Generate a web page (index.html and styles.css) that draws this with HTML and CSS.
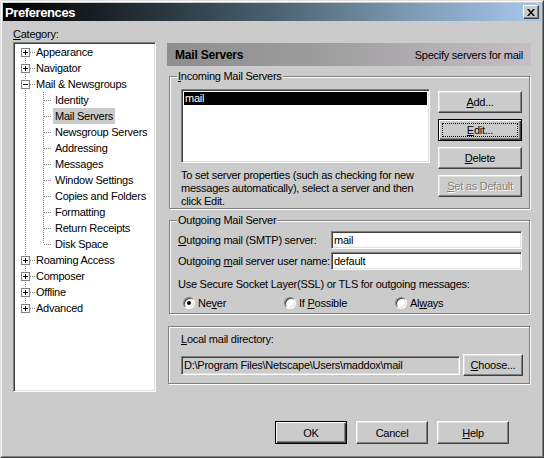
FILE: index.html
```html
<!DOCTYPE html>
<html lang="en">
<head>
    <meta charset="UTF-8">
    <title>Preferences</title>
    <link rel="stylesheet" href="styles.css">
</head>
<body>
<div class="window">
  <div class="frame">
    <header class="titlebar">
        <span class="title">Preferences</span>
        <span class="close">
            <svg width="8" height="7" viewBox="0 0 8 7"><path d="M0 0h2l2 2.4 2-2.4h2l-3 3.5 3 3.5h-2l-2-2.4-2 2.4h-2l3-3.5z" fill="#000"/></svg>
        </span>
    </header>

    <div class="main">
        <aside class="sidebar">
            <div class="cat-label"><u>C</u>ategory:</div>
            <div class="tree">
                <div class="node l-first"><svg class="exp" width="9" height="9"><rect x="0.5" y="0.5" width="8" height="8" fill="#fff" stroke="#808080"/><path d="M2 4.5h5M4.5 2v5" stroke="#000"/></svg><span class="hl"></span><span class="txt">Appearance</span></div>
                <div class="node l-full"><svg class="exp" width="9" height="9"><rect x="0.5" y="0.5" width="8" height="8" fill="#fff" stroke="#808080"/><path d="M2 4.5h5M4.5 2v5" stroke="#000"/></svg><span class="hl"></span><span class="txt">Navigator</span></div>
                <div class="node l-full"><svg class="exp" width="9" height="9"><rect x="0.5" y="0.5" width="8" height="8" fill="#fff" stroke="#808080"/><path d="M2 4.5h5" stroke="#000"/></svg><span class="hl"></span><span class="txt">Mail &amp; Newsgroups</span></div>
                <div class="node child l-full"><span class="hl"></span><span class="txt">Identity</span></div>
                <div class="node child l-full"><span class="hl"></span><span class="txt selected">Mail Servers</span></div>
                <div class="node child l-full"><span class="hl"></span><span class="txt">Newsgroup Servers</span></div>
                <div class="node child l-full"><span class="hl"></span><span class="txt">Addressing</span></div>
                <div class="node child l-full"><span class="hl"></span><span class="txt">Messages</span></div>
                <div class="node child l-full"><span class="hl"></span><span class="txt">Window Settings</span></div>
                <div class="node child l-full"><span class="hl"></span><span class="txt">Copies and Folders</span></div>
                <div class="node child l-full"><span class="hl"></span><span class="txt">Formatting</span></div>
                <div class="node child l-full"><span class="hl"></span><span class="txt">Return Receipts</span></div>
                <div class="node child last l-full"><span class="hl"></span><span class="txt">Disk Space</span></div>
                <div class="node l-full"><svg class="exp" width="9" height="9"><rect x="0.5" y="0.5" width="8" height="8" fill="#fff" stroke="#808080"/><path d="M2 4.5h5M4.5 2v5" stroke="#000"/></svg><span class="hl"></span><span class="txt">Roaming Access</span></div>
                <div class="node l-full"><svg class="exp" width="9" height="9"><rect x="0.5" y="0.5" width="8" height="8" fill="#fff" stroke="#808080"/><path d="M2 4.5h5M4.5 2v5" stroke="#000"/></svg><span class="hl"></span><span class="txt">Composer</span></div>
                <div class="node l-full"><svg class="exp" width="9" height="9"><rect x="0.5" y="0.5" width="8" height="8" fill="#fff" stroke="#808080"/><path d="M2 4.5h5M4.5 2v5" stroke="#000"/></svg><span class="hl"></span><span class="txt">Offline</span></div>
                <div class="node l-last"><svg class="exp" width="9" height="9"><rect x="0.5" y="0.5" width="8" height="8" fill="#fff" stroke="#808080"/><path d="M2 4.5h5M4.5 2v5" stroke="#000"/></svg><span class="hl"></span><span class="txt">Advanced</span></div>
            </div>
        </aside>

        <section class="panel">
            <div class="panel-head">
                <span class="panel-title">Mail Servers</span>
                <span>Specify servers for mail</span>
            </div>

            <fieldset class="group incoming">
                <legend><u>I</u>ncoming Mail Servers</legend>
                <div class="incoming-row">
                    <div class="incoming-left">
                        <div class="listbox">
                            <div class="list-item selected">mail</div>
                        </div>
                        <p class="hint">To set server properties (such as checking for new messages automatically), select a server and then click Edit.</p>
                    </div>
                    <div class="btn-col">
                        <button class="btn"><u>A</u>dd...</button>
                        <button class="btn default focus"><u>E</u>dit...</button>
                        <button class="btn"><u>D</u>elete</button>
                        <button class="btn disabled"><u>S</u>et as Default</button>
                    </div>
                </div>
            </fieldset>

            <fieldset class="group outgoing">
                <legend>Outgoing Mail Server</legend>
                <div class="form-row">
                    <label><u>O</u>utgoing mail (SMTP) server:</label>
                    <input class="field" value="mail">
                </div>
                <div class="form-row">
                    <label>Outgoing <u>m</u>ail server user name:</label>
                    <input class="field" value="default">
                </div>
                <div class="ssl-text">Use Secure Socket Layer(SSL) or TLS for outgoing messages:</div>
                <div class="radios">
                    <span class="radio-item first"><span class="radio checked"></span><span>Ne<u>v</u>er</span></span>
                    <span class="radio-item second"><span class="radio"></span><span>If <u>P</u>ossible</span></span>
                    <span class="radio-item"><span class="radio"></span><span>Al<u>w</u>ays</span></span>
                </div>
            </fieldset>

            <div class="group local">
                <div class="local-label"><u>L</u>ocal mail directory:</div>
                <div class="local-row">
                    <input class="field path" value="D:\Program Files\Netscape\Users\maddox\mail" disabled>
                    <button class="btn choose"><u>C</u>hoose...</button>
                </div>
            </div>
        </section>
    </div>

    <footer class="footer">
        <button class="btn big default">OK</button>
        <button class="btn big">Cancel</button>
        <button class="btn big"><u>H</u>elp</button>
    </footer>
  </div>
</div>
</body>
</html>
```

FILE: styles.css
```css
* { box-sizing: border-box; }
body { margin: 0; background: #cbcbcb; color: #000; font-family: "Liberation Sans", Arial, sans-serif; font-size: 11px; letter-spacing: -0.25px; }
u { text-decoration: underline; text-underline-offset: 1px; }

.window { width: 544px; height: 458px; background: #cbcbcb; border: 1px solid; border-color: #dfdfdf #404040 #404040 #dfdfdf; }
.frame { height: 100%; padding: 1px; border: 1px solid; border-color: #fff #808080 #808080 #fff; display: flex; flex-direction: column; }

.titlebar { height: 18px; display: flex; align-items: center; justify-content: space-between; padding: 0 2px; background: linear-gradient(to right, #000 0%, #27333b 28%, #4f6574 52%, #7d9bb4 76%, #a8c8ee 100%); }
.title { color: #fff; font-weight: bold; font-size: 13px; letter-spacing: -0.4px; }
.close { width: 16px; height: 14px; display: flex; align-items: center; justify-content: center; background: #cbcbcb; border: 1px solid; border-color: #fff #404040 #404040 #fff; box-shadow: inset -1px -1px 0 #808080; }

.main { display: flex; gap: 11px; padding: 6px 0 0 10px; }
.sidebar { width: 143px; }
.cat-label { height: 15px; line-height: 14px; }

.tree, .listbox, .field { border: 1px solid; border-color: #808080 #fff #fff #808080; box-shadow: inset 1px 1px 0 #404040, inset -1px -1px 0 #dfdfdf; }
.tree { height: 350px; background: #fff; padding: 1px; }

.node { position: relative; height: 16px; display: flex; align-items: center; padding-left: 6px; white-space: nowrap; }
.node .exp { position: relative; z-index: 1; flex: none; }
.node .hl { flex: none; width: 5px; height: 1px; background: repeating-linear-gradient(to right, #808080 0 1px, transparent 1px 2px); }
.node .txt { padding: 0 2px 0 1px; line-height: 16px; }
.node::after { content: ''; position: absolute; left: 10px; width: 1px; background: repeating-linear-gradient(to bottom, #808080 0 1px, transparent 1px 2px); }
.node.l-full::after { top: 0; bottom: 0; }
.node.l-first::after { top: 8px; bottom: 0; }
.node.l-last::after { top: 0; bottom: 8px; }

.node.child { padding-left: 29px; }
.node.child::before { content: ''; position: absolute; left: 28px; top: 0; bottom: 0; width: 1px; background: repeating-linear-gradient(to bottom, #808080 0 1px, transparent 1px 2px); }
.node.child.last::before { bottom: 8px; }
.node.child .hl { width: 8px; margin-right: 1px; }
.node.child .txt { padding: 0 2px; }
.txt.selected { background: #cbcbcb; }

.panel { width: 364px; padding-top: 16px; }
.panel-head { height: 23px; display: flex; align-items: center; justify-content: space-between; padding: 0 8px; background: linear-gradient(to right, #8e8e8e 0%, #9c9c9c 40%, #b4b0b4 75%, #c6bec6 100%); }
.panel-title { font-weight: bold; font-size: 12px; letter-spacing: -0.2px; }

.group { margin: 0 1px 0 2px; border: 1px solid #808080; box-shadow: inset 1px 1px 0 #fff, 1px 1px 0 #fff; min-inline-size: 0; }
fieldset.group { padding: 0 7px 0 8px; }
.group legend { padding: 0 1px; margin-left: -1px; line-height: 14px; background: #cbcbcb; }

.incoming { margin-top: 3px; padding-top: 6px !important; }
.incoming-row { display: flex; gap: 8px; margin-left: 3px; }
.incoming-left { width: 249px; }
.listbox { height: 74px; background: #fff; padding: 2px 2px 0 2px; }
.list-item { height: 13px; line-height: 13px; padding-left: 1px; }
.list-item.selected { background: #000; color: #fff; }
.hint { margin: 6px 0 0 0; line-height: 13px; }

.btn-col { display: flex; flex-direction: column; gap: 6px; padding-top: 2px; }
.btn { position: relative; width: 84px; height: 22px; padding: 0; font: inherit; letter-spacing: inherit; color: #000; background: #cbcbcb; border: 1px solid; border-color: #fff #404040 #404040 #fff; box-shadow: inset -1px -1px 0 #808080, inset 1px 1px 0 #dfdfdf; }
.btn.default { border: 1px solid #000; box-shadow: inset 1px 1px 0 #fff, inset -1px -1px 0 #404040, inset -2px -2px 0 #808080; }
.btn.focus::after { content: ''; position: absolute; left: 3px; top: 3px; right: 3px; bottom: 3px; border: 1px dotted #000; }
.btn.disabled { color: #808080; text-shadow: 1px 1px 0 #fff; }

.outgoing { margin-top: 4px; padding-top: 4px !important; padding-bottom: 3px !important; }
.form-row { display: flex; align-items: center; height: 18px; margin-bottom: 3px; }
.form-row label { width: 153px; white-space: nowrap; }
.field { width: 191px; height: 18px; padding: 0 2px; font: inherit; letter-spacing: inherit; color: #000; background: #fff; outline: none; }
.ssl-text { margin-top: 7px; line-height: 14px; }
.radios { display: flex; align-items: center; height: 14px; margin-top: 5px; padding-left: 5px; }
.radio-item { display: flex; align-items: center; }
.radio-item.first { width: 101px; }
.radio-item.second { width: 111px; }
.radio { position: relative; width: 12px; height: 12px; border-radius: 50%; background: #fff; border: 1px solid; border-color: #808080 #fff #fff #808080; box-shadow: inset 1px 1px 0 #404040, inset -1px -1px 0 #dfdfdf; margin-right: 3px; }
.radio.checked::after { content: ''; position: absolute; left: 3px; top: 3px; width: 4px; height: 4px; border-radius: 50%; background: #000; }

.local { margin-top: 12px; margin-left: 1px; height: 58px; padding: 5px 0 0 12px; }
.local-label { line-height: 14px; }
.local-row { display: flex; align-items: center; gap: 3px; margin-top: 8px; }
.field.path { width: 279px; height: 19px; background: #cbcbcb; color: #000; }
.btn.choose { width: 60px; }

.footer { display: flex; justify-content: flex-end; gap: 9px; padding: 29px 32px 0 0; }
.btn.big { width: 72px; height: 23px; }
```
